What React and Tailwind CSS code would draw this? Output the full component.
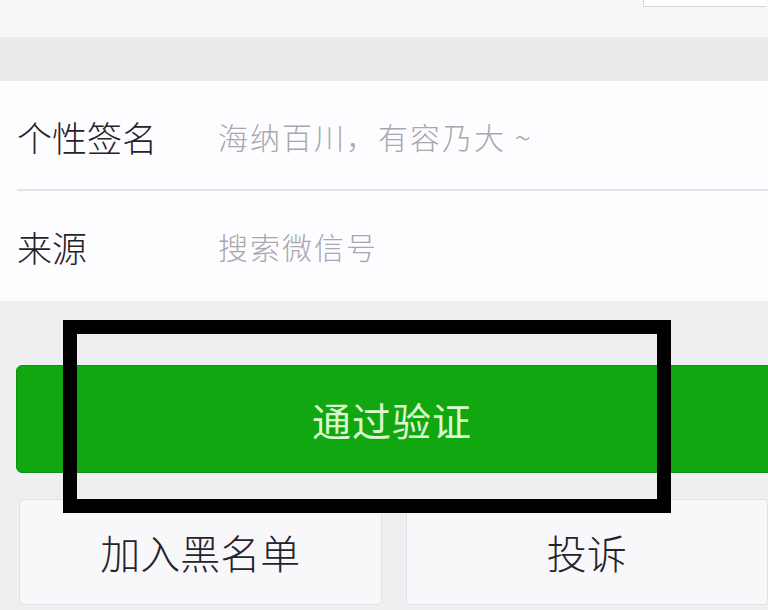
const font = { fontFamily: '"Noto Sans CJK SC", "Noto Sans", sans-serif' };

const InfoRow = ({ label, value, divider }) => (
  <div className="relative flex items-center h-[110px]">
    <span className="w-[218px] pl-[17px] text-[35px] font-light leading-none text-[#26222b]">{label}</span>
    <span className="text-[30px] font-light leading-none tracking-[2px] text-[#a9a7ae]">{value}</span>
    {divider && <div className="absolute bottom-0 left-[17px] right-0 h-[2px] bg-[#e4e4e8]" />}
  </div>
);

export default function App() {
  return (
    <div className="relative w-[768px] h-[610px] overflow-hidden bg-[#efeff1]" style={font}>
      {/* top strip */}
      <div className="h-[37px] bg-[#f7f7f9] flex justify-end">
        <div className="w-[123px] h-[7px] mr-[2px] bg-white border-l border-b border-[#d6d6da]" />
      </div>
      <div className="h-[44px] bg-[#ebebed]" />

      {/* info rows */}
      <div className="bg-[#fdfdff]">
        <InfoRow label="个性签名" value="海纳百川，有容乃大 ~" divider />
        <InfoRow label="来源" value="搜索微信号" />
      </div>

      {/* actions */}
      <div className="pt-[64px] pl-[16px]">
        <button className="w-[760px] h-[108px] rounded-[6px] bg-[#11a711] border border-[#0d960d] flex items-center justify-center pr-[8px]">
          <span className="text-[39px] leading-none tracking-[1px] text-[#dcf8cc]">通过验证</span>
        </button>
        <div className="flex gap-[24px] mt-[26px] pl-[3px]">
          <button className="w-[364px] h-[106px] rounded-[4px] bg-[#f8f8fa] border border-[#e2e2e6] flex items-center justify-center">
            <span className="text-[40px] font-light leading-none text-[#26222b]">加入黑名单</span>
          </button>
          <button className="w-[364px] h-[106px] rounded-[4px] bg-[#f8f8fa] border border-[#e2e2e6] flex items-center justify-center">
            <span className="text-[40px] font-light leading-none text-[#26222b]">投诉</span>
          </button>
        </div>
      </div>

      {/* highlight annotation */}
      <div className="absolute left-[63px] top-[320px] w-[608px] h-[193px] border-[14px] border-black" />
    </div>
  );
}
